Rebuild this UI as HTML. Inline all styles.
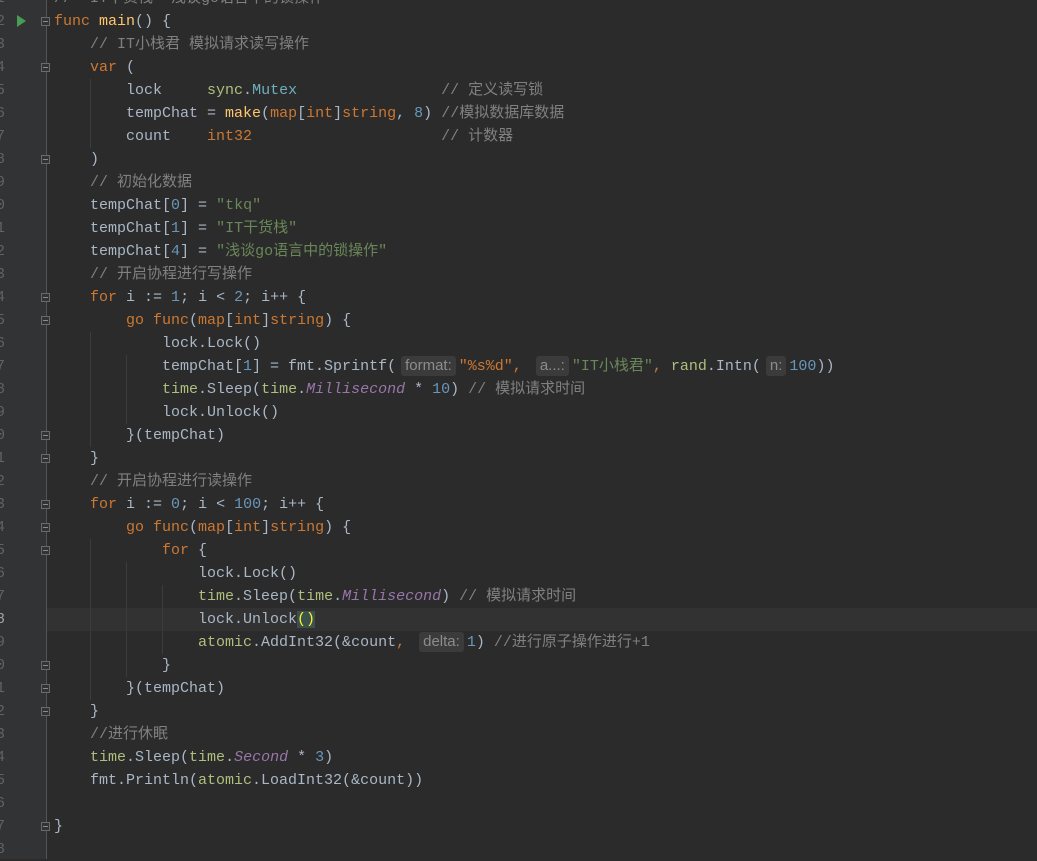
<!DOCTYPE html>
<html><head><meta charset="utf-8"><style>
html,body{margin:0;padding:0;width:1037px;height:859px;overflow:hidden;background:#2b2b2b}
#g{position:absolute;left:0;top:0;width:46px;height:859px;background:#313335;border-right:1px solid #555}
#nums{position:absolute;left:-4px;top:-13px;width:12px;font:15px "Liberation Mono",monospace;color:#606366;line-height:23px}
#code{position:absolute;left:54px;top:-13px;font:15px "Liberation Mono","Noto Sans CJK SC",monospace;color:#a9b7c6;line-height:23px}
.l{height:23px;white-space:pre}
.k{color:#cc7832}.c{color:#808080}.s{color:#6a8759}.n{color:#6897bb}.f{color:#ffc66d}.p{color:#afbf7e}.t{color:#6fafbd}.i{color:#9876aa;font-style:italic}
.h{display:inline-block;background:#3b3b3b;color:#8c8c8c;font:15px "Liberation Sans",sans-serif;line-height:20px;padding:0 4px;margin:0 3px 0 5px;border-radius:3px;vertical-align:0}
.fd{position:absolute;left:41px;width:9px;height:9px;border:1px solid #6a6a6a;background:#313335;box-sizing:border-box}
.fd:after{content:"";position:absolute;left:1px;top:3px;width:5px;height:1px;background:#8a8a8a}
.ig{position:absolute;width:1px;background:#3c3c3c}
#cur{position:absolute;left:47px;right:0;top:608px;height:23px;background:#323232}
</style></head><body>
<div id="cur"></div>
<div id="g"></div>
<div class="ig" style="left:90px;top:79px;height:69px"></div>
<div class="ig" style="left:90px;top:332px;height:115px"></div>
<div class="ig" style="left:126px;top:355px;height:69px"></div>
<div class="ig" style="left:90px;top:539px;height:161px"></div>
<div class="ig" style="left:126px;top:562px;height:115px"></div>
<div class="ig" style="left:162px;top:585px;height:69px"></div>
<svg style="position:absolute;left:16px;top:15px" width="11" height="12"><path d="M1 0 L10 6 L1 12Z" fill="#499c54"/></svg>
<div id="nums">1<br>2<br>3<br>4<br>5<br>6<br>7<br>8<br>9<br>0<br>1<br>2<br>3<br>4<br>5<br>6<br>7<br>8<br>9<br>0<br>1<br>2<br>3<br>4<br>5<br>6<br>7<br><span style="color:#a4a3a3">8</span><br>9<br>0<br>1<br>2<br>3<br>4<br>5<br>6<br>7<br>8</div>
<div class="fd" style="top:17px"></div>
<div class="fd" style="top:63px"></div>
<div class="fd" style="top:155px"></div>
<div class="fd" style="top:293px"></div>
<div class="fd" style="top:316px"></div>
<div class="fd" style="top:431px"></div>
<div class="fd" style="top:454px"></div>
<div class="fd" style="top:500px"></div>
<div class="fd" style="top:523px"></div>
<div class="fd" style="top:546px"></div>
<div class="fd" style="top:661px"></div>
<div class="fd" style="top:684px"></div>
<div class="fd" style="top:707px"></div>
<div class="fd" style="top:822px"></div>
<div id="code">
<div class="l"><span class="c">//  IT干货栈  浅谈go语言中的锁操作</span></div>
<div class="l"><span class="k">func</span> <span class="f">main</span>() {</div>
<div class="l">    <span class="c">// IT小栈君 模拟请求读写操作</span></div>
<div class="l">    <span class="k">var</span> (</div>
<div class="l">        lock     <span class="p">sync</span>.<span class="t">Mutex</span>                <span class="c">// 定义读写锁</span></div>
<div class="l">        tempChat = <span class="f">make</span>(<span class="k">map</span>[<span class="k">int</span>]<span class="k">string</span>, <span class="n">8</span>) <span class="c">//模拟数据库数据</span></div>
<div class="l">        count    <span class="k">int32</span>                     <span class="c">// 计数器</span></div>
<div class="l">    )</div>
<div class="l">    <span class="c">// 初始化数据</span></div>
<div class="l">    tempChat[<span class="n">0</span>] = <span class="s">"tkq"</span></div>
<div class="l">    tempChat[<span class="n">1</span>] = <span class="s">"IT干货栈"</span></div>
<div class="l">    tempChat[<span class="n">4</span>] = <span class="s">"浅谈go语言中的锁操作"</span></div>
<div class="l">    <span class="c">// 开启协程进行写操作</span></div>
<div class="l">    <span class="k">for</span> i := <span class="n">1</span>; i &lt; <span class="n">2</span>; i++ {</div>
<div class="l">        <span class="k">go func</span>(<span class="k">map</span>[<span class="k">int</span>]<span class="k">string</span>) {</div>
<div class="l">            lock.Lock()</div>
<div class="l">            tempChat[<span class="n">1</span>] = fmt.Sprintf(<span class="h">format:</span><span style="color:#cc7832">"%s%d"</span><span class="k">,</span> <span class="h">a...:</span><span class="s">"IT小栈君"</span><span class="k">,</span> <span class="p">rand</span>.Intn(<span class="h">n:</span><span class="n">100</span>))</div>
<div class="l">            <span class="p">time</span>.Sleep(<span class="p">time</span>.<span class="i">Millisecond</span> * <span class="n">10</span>) <span class="c">// 模拟请求时间</span></div>
<div class="l">            lock.Unlock()</div>
<div class="l">        }(tempChat)</div>
<div class="l">    }</div>
<div class="l">    <span class="c">// 开启协程进行读操作</span></div>
<div class="l">    <span class="k">for</span> i := <span class="n">0</span>; i &lt; <span class="n">100</span>; i++ {</div>
<div class="l">        <span class="k">go func</span>(<span class="k">map</span>[<span class="k">int</span>]<span class="k">string</span>) {</div>
<div class="l">            <span class="k">for</span> {</div>
<div class="l">                lock.Lock()</div>
<div class="l">                <span class="p">time</span>.Sleep(<span class="p">time</span>.<span class="i">Millisecond</span>) <span class="c">// 模拟请求时间</span></div>
<div class="l">                lock.Unlock<span style="background:#3b514d;color:#ffef28">()</span></div>
<div class="l">                <span class="p">atomic</span>.AddInt32(&amp;count<span class="k">,</span> <span class="h">delta:</span><span class="n">1</span>) <span class="c">//进行原子操作进行+1</span></div>
<div class="l">            }</div>
<div class="l">        }(tempChat)</div>
<div class="l">    }</div>
<div class="l">    <span class="c">//进行休眠</span></div>
<div class="l">    <span class="p">time</span>.Sleep(<span class="p">time</span>.<span class="i">Second</span> * <span class="n">3</span>)</div>
<div class="l">    fmt.Println(<span class="p">atomic</span>.LoadInt32(&amp;count))</div>
<div class="l"> </div>
<div class="l">}</div>
</div>
</body></html>
